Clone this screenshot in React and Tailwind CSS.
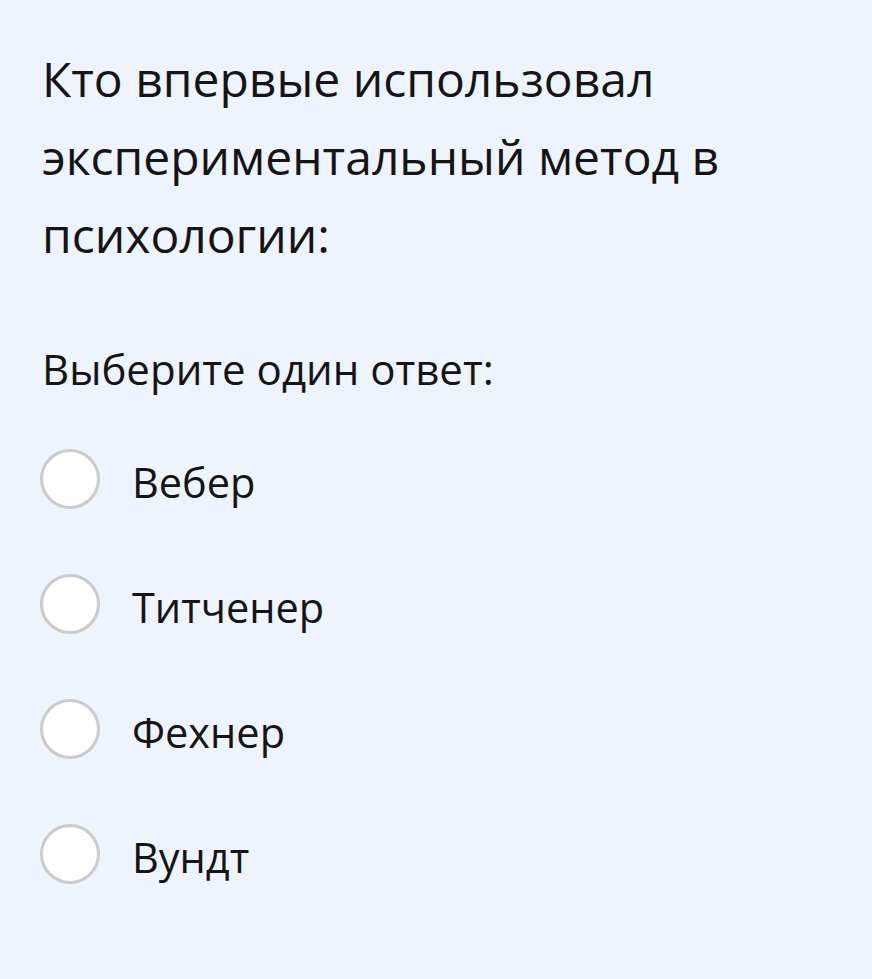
const options = ["Вебер", "Титченер", "Фехнер", "Вундт"];

export default function App() {
  return (
    <div className="min-h-screen bg-[#eef4fe] px-[42px] pt-[40px] font-['Open_Sans',sans-serif] text-[#151515]">
      <h1 className="text-[48px] leading-[78px] font-normal">
        Кто впервые использовал экспериментальный метод в психологии:
      </h1>
      <p className="mt-[67px] text-[42px] leading-[56px]">Выберите один ответ:</p>
      <div className="mt-[52px] -ml-[2px] flex flex-col gap-[62px]">
        {options.map((o) => (
          <label key={o} className="flex items-start gap-[32px]">
            <span className="h-[60px] w-[60px] shrink-0 rounded-full border-[3px] border-[#cbcbcb] bg-white" />
            <span className="pt-[3px] text-[41.5px] leading-[60px]">{o}</span>
          </label>
        ))}
      </div>
    </div>
  );
}
